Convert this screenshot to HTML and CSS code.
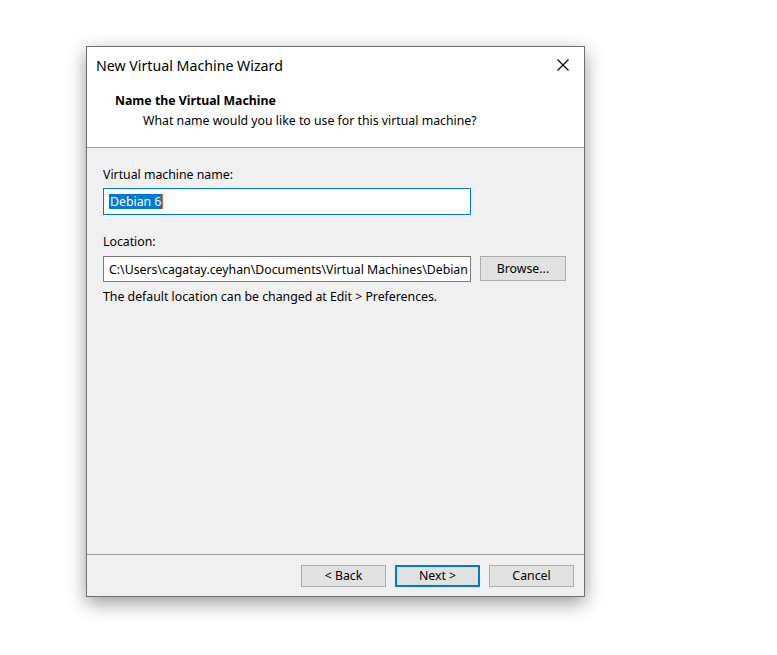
FILE: index.html
```html
<!DOCTYPE html>
<html>
<head>
<meta charset="utf-8">
<link rel="stylesheet" href="styles.css">
</head>
<body>
<div class="dialog">
  <div class="top">
    <div class="titlebar">
      <span class="title">New Virtual Machine Wizard</span>
      <span class="close"><svg width="12" height="12" viewBox="0 0 12 12"><path d="M0.5 0.5 L11.5 11.5 M11.5 0.5 L0.5 11.5" stroke="#000" stroke-width="1.1" fill="none"/></svg></span>
    </div>
    <div class="header">
      <div class="h-title">Name the Virtual Machine</div>
      <div class="h-sub">What name would you like to use for this virtual machine?</div>
    </div>
  </div>
  <div class="body">
    <div class="label first">Virtual machine name:</div>
    <div class="field focused"><span class="sel">Debian 6</span><span class="caret"></span></div>
    <div class="label second">Location:</div>
    <div class="row">
      <div class="field loc"><span class="clip">C:\Users\cagatay.ceyhan\Documents\Virtual Machines\Debian 6</span></div>
      <div class="btn browse">Browse...</div>
    </div>
    <div class="note">The default location can be changed at Edit &gt; Preferences.</div>
  </div>
  <div class="footer">
    <div class="btn">&lt; Back</div>
    <div class="btn default">Next &gt;</div>
    <div class="btn">Cancel</div>
  </div>
</div>
</body>
</html>
```
FILE: styles.css
```css
html, body {
  margin: 0;
  padding: 0;
  background: #ffffff;
}
body {
  font-family: "Noto Sans", "Open Sans", sans-serif;
  font-size: 12.3px;
  color: #000;
  min-height: 655px;
}
.dialog {
  margin: 46px 0 0 86px;
  width: 497px;
  height: 549px;
  border: 1px solid #707070;
  background: #f0f0f0;
  box-shadow: 0 6px 18px rgba(0, 0, 0, 0.4);
  display: flex;
  flex-direction: column;
}
.top {
  background: #fff;
  height: 100px;
  border-bottom: 1px solid #a0a0a0;
}
.titlebar {
  display: flex;
  justify-content: space-between;
  align-items: center;
  height: 37px;
  padding: 0 15px 0 9px;
}
.title {
  font-size: 14.2px;
  line-height: 20px;
}
.close {
  display: flex;
  margin-top: -1px;
}
.header {
  padding-left: 28px;
}
.h-title {
  font-weight: bold;
  line-height: 16px;
  margin-top: 9px;
}
.h-sub {
  line-height: 16px;
  margin-top: 4px;
  padding-left: 28px;
}
.body {
  flex: 1;
  padding: 0 18px 0 16px;
}
.label {
  line-height: 16px;
}
.label.first {
  margin-top: 19px;
}
.field {
  box-sizing: border-box;
  width: 368px;
  height: 27px;
  margin-top: 5px;
  background: #fff;
  border: 1px solid #7a7a7a;
  padding: 0 0 0 5px;
  display: flex;
  align-items: center;
  white-space: nowrap;
  overflow: hidden;
}
.field.focused {
  border-color: #0078d7;
}
.sel {
  background: #0078d7;
  color: #fff;
  line-height: 15px;
  padding: 0 1px;
}
.caret {
  display: inline-block;
  width: 1px;
  height: 15px;
  background: #e46a28;
}
.label.second {
  margin-top: 19px;
}
.row {
  display: flex;
  align-items: flex-start;
  gap: 9px;
  margin-top: 6px;
}
.field.loc {
  margin-top: 0;
  height: 26px;
  flex: none;
}
.clip {
  flex: none;
}
.btn {
  box-sizing: border-box;
  width: 85px;
  height: 22px;
  background: #e1e1e1;
  border: 1px solid #adadad;
  display: flex;
  align-items: center;
  justify-content: center;
  line-height: 16px;
}
.btn.browse {
  width: 86px;
  height: 25px;
}
.btn.default {
  border: 2px solid #0078d7;
}
.note {
  line-height: 16px;
  margin-top: 7px;
}
.footer {
  height: 42px;
  border-top: 1px solid #a0a0a0;
  display: flex;
  justify-content: flex-end;
  align-items: flex-start;
  gap: 9px;
  padding: 10px 10px 0 0;
  box-sizing: border-box;
}
```
